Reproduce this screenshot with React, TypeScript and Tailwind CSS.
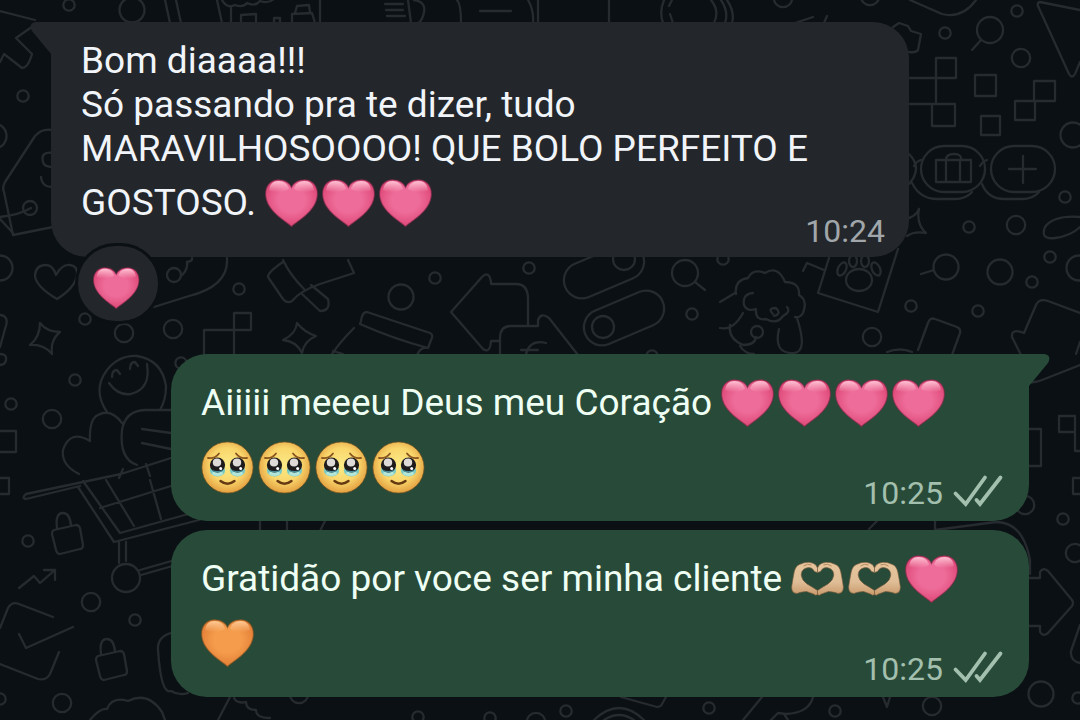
import React from "react";

function PinkHeart({ className = "h-14 w-[57px]" }: { className?: string }) {
  return <Heart id="pink" label="coração rosa" top="#ffc4d6" mid="#ee6c99" low="#dc4474" edge="#7d2748" className={className} />;
}

function OrangeHeart() {
  return <Heart id="orange" label="coração laranja" top="#ffcb94" mid="#f59c4c" low="#e07c34" edge="#80501f" className="h-14 w-[57px]" />;
}

type HeartProps = { id: string; label: string; top: string; mid: string; low: string; edge: string; className: string };

function Heart({ id, label, top, mid, low, edge, className }: HeartProps) {
  const shape = "M28.500 51.500C25 47.500 3.500 37 2.600 20C2.200 10.500 8 4.800 15.500 4.800C22 4.800 26.500 8 28.500 12.500C30.500 8 35 4.800 41.500 4.800C49 4.800 54.800 10.500 54.400 20C53.500 37 32 47.500 28.500 51.500Z";
  return (
    <svg role="img" aria-label={label} viewBox="2 0 57 56" className={`shrink-0 ${className}`}>
      <defs>
        <radialGradient id={`${id}-body`} cx="50%" cy="44%" r="58%">
          <stop offset="0" stopColor={mid} />
          <stop offset="0.45" stopColor={mid} />
          <stop offset="1" stopColor={low} />
        </radialGradient>
        <linearGradient id={`${id}-shine`} x1="0" y1="0" x2="0" y2="1">
          <stop offset="0" stopColor={top} />
          <stop offset="1" stopColor={top} stopOpacity="0" />
        </linearGradient>
      </defs>
      <path d={shape} fill={`url(#${id}-body)`} stroke={edge} strokeOpacity="0.6" strokeWidth="1.2" />
      <path d="M6 15C7 9 10 6 15.500 6C21 6 25 9 26 14C20 18 10 18 6 15Z" fill={`url(#${id}-shine)`} />
      <path d="M51 15C50 9 47 6 41.500 6C36 6 32 9 31 14C37 18 47 18 51 15Z" fill={`url(#${id}-shine)`} />
    </svg>
  );
}

function TearyEye({ cx }: { cx: number }) {
  return (
    <g>
      <ellipse cx={cx} cy="31.500" rx="7.600" ry="6" fill="#79c8c4" />
      <ellipse cx={cx} cy="34.500" rx="5.500" ry="2.600" fill="#b2e6d8" />
      <circle cx={cx} cy="26" r="7.600" fill="#1d1b1c" />
      <path d={`M${cx - 6} 30.500q6 3 12 0q-1.500 3-6 3t-6-3Z`} fill="#4c8c98" />
      <ellipse cx={cx - 0.5} cy="23.500" rx="4.200" ry="3.900" fill="#dedad8" />
      <circle cx={cx + 3.2} cy="29.500" r="1.500" fill="#fff" />
    </g>
  );
}

function TearyFace() {
  return (
    <svg role="img" aria-label="rosto segurando as lágrimas" viewBox="2 0 57 56" className="h-14 w-[57px] shrink-0">
      <defs>
        <radialGradient id="face" cx="50%" cy="45%" r="55%">
          <stop offset="0" stopColor="#fbea86" />
          <stop offset="0.6" stopColor="#f9d66c" />
          <stop offset="1" stopColor="#e3a040" />
        </radialGradient>
      </defs>
      <circle cx="28.500" cy="28.500" r="25.600" fill="url(#face)" stroke="#6e4f20" strokeOpacity="0.7" />
      <TearyEye cx={18.5} />
      <TearyEye cx={38.5} />
      <path d="M9 19q7 1 11-4.500M48 19q-7 1-11-4.500" fill="none" stroke="#8a5520" strokeWidth="1.800" strokeLinecap="round" />
      <path d="M21.500 42q7 5.500 14 0" fill="none" stroke="#653a12" strokeWidth="2.400" strokeLinecap="round" />
    </svg>
  );
}

const hand =
  "M28.500 43.500Q26.500 45 24.500 43L17.500 40.500Q11 41 8 42.500Q4 42.500 3 39L2.600 36Q4 27 5.200 21Q6.500 15 10.500 13.500L15.200 11.700Q20 10.700 24 12.200Q27.500 13.500 28.500 17V21.500L25.500 20.500Q23 15.800 18 16.800Q12 18.500 12.200 24Q12.500 29 18 33Q24 36.500 28.500 39.500Z";

function HeartHands() {
  return (
    <svg role="img" aria-label="mãos em coração" viewBox="2 0 57 56" className="h-14 w-[57px] shrink-0">
      <defs>
        <linearGradient id="skin" x1="0" y1="0" x2="0" y2="1">
          <stop offset="0" stopColor="#e6c49c" />
          <stop offset="0.6" stopColor="#dfbd96" />
          <stop offset="1" stopColor="#c99a6c" />
        </linearGradient>
      </defs>
      <g fill="url(#skin)" stroke="#7a5c3c" strokeOpacity="0.7" strokeWidth="0.900" strokeLinejoin="round">
        <path d={hand} />
        <path d={hand} transform="translate(57 0) scale(-1 1)" />
      </g>
      <path d="M14.500 15q4-3 8-1M42.500 15q-4-3-8-1" fill="none" stroke="#b58a5f" />
    </svg>
  );
}

function ReadTicks() {
  return (
    <svg role="img" aria-label="Entregue" viewBox="0 0 52 32" className="h-8 w-[52px] shrink-0 overflow-visible">
      <path d="M2.500 16.500L12.700 27L32 0.500M23.500 23L27 27L47.500 0.500" fill="none" stroke="#a3bfad" strokeWidth="3.800" strokeLinejoin="miter" strokeLinecap="round" />
    </svg>
  );
}

const small = [[69, 5], [23, 96], [85, 319], [239, 289], [75, 380], [11, 404], [28, 541], [135, 620], [0, 699], [435, 278], [529, 268], [692, 314], [181, 363], [945, 33], [1017, 11], [1065, 197], [969, 227], [911, 306], [978, 311], [1032, 282], [1050, 257], [723, 259], [1063, 519], [835, 711], [1078, 698], [652, 356], [566, 711], [709, 708], [418, 717], [490, 718]];
const medium = [[124, 333], [173, 329], [91, 602], [52, 419], [62, 703], [872, 337], [1021, 58], [1016, 225], [1025, 505], [932, 706], [1075, 553], [870, -4], [783, -2], [536, 722], [299, 694]];
const large = [[132, 10], [401, 297], [1000, 272], [1073, 135], [1079, 268], [0, 268], [-6, 136], [1041, 694], [946, 267]];

function Wallpaper() {
  return (
    <svg aria-hidden="true" viewBox="0 0 1080 720" preserveAspectRatio="xMidYMin slice" className="absolute inset-0 h-full w-full">
      <g fill="none" stroke="#262b2f" strokeWidth="2.300" strokeLinejoin="round" strokeLinecap="round">
        {small.map(([x, y]) => <circle key={`${x}-${y}`} cx={x} cy={y} r="5.700" />)}
        {medium.map(([x, y]) => <circle key={`${x}-${y}`} cx={x} cy={y} r="9.200" />)}
        {large.map(([x, y]) => <circle key={`${x}-${y}`} cx={x} cy={y} r="12.500" />)}

        <path d="M0 11L35 20M36 24L16 38L32 54Q28 68 22 68L4 54L0 62" />
        <path d="M165 0L170 23M176 0L181 23M217 0L222 23M222 0q5 9 13 5q8 3 12-2q8 4 13-2q8 3 14-2M231 8v15M241 23v-8l15-1v9M274 23v-5h6v5M292 23v-9l20-1l3 10M295 13l2-7l12-1l1 7M320 0v23" />
        <path d="M385 4h18M386 10h17M387 16h18M408 0l3 23M414 0q14 2 9 16q-2 6-6 8M457 0q4 4 4 23M480 11h31M528 0q6 10 5 23M538 0v23M609 0v23" />
        <path d="M664 0q-5 12-1 23M672 0l-3 6M670 14l3 9M711 0q9 11 3 23M721 0q8 12 4 23M727 0q8 12 5 23M795 23l18-6M824 23l3-7M910 0l32 14q20 5 34-14" />
        <circle cx="990" cy="30" r="13" /><path d="M981 40l-9 10M893 27l6-4l9 3l3 5l10 3l-3 16q-2 3-9 2" />
        <path d="M1080 10L1040 2q-3 0-2 4l31 68q3 5 6 0l5-12" />
        <path d="M52 130q-10-2-17 6L5 182q-3 6-1 10l9 43l40-8M54 153q-14-2-11 9q1 5 10 5M41 177q1 10 11 10" />
        <circle cx="30" cy="208" r="7" /><path d="M31 208q-12 7-31 9M0 219l13 14" />

        <path d="M936 58h20v20h-20zM910 78h26v26h-26M932 104h23v22h-23zM975 75h21v21h-21zM981 116h19v19h-19zM1034 81h21v20h-21zM1015 101h20v19h-20z" />
        <rect x="921" y="146" width="64" height="46" rx="23" /><path d="M912 183q8 16 25 16h18q11 0 17-7M909 154q14 14 0 30M921 160q-4 1-7 6M987 160q-4 1-7 6M982 184q6 15 22 15h18q11 0 17-7" />
        <rect x="991" y="146" width="64" height="46" rx="23" /><path d="M1009 169h27M1023 156v27M936 160h35v22h-35zM946 160v22M960 160v22M946 160q0-6 8-6t7 6" />
        <path d="M919 209q-3 8-14 10M919 209q-3 15 7 24q-12-2-19 3M1080 217q-26-2-35 10q-5 13 10 11q16-2 25-11" />

        <path d="M57 299Q35 286 35 275Q36 265 46 265Q53 265 56 275Q62 264 70 265Q78 266 77 275Q75 288 57 299Z" />
        <path d="M40 323q7 9 20 9q-10 8-8 22q-8-10-22-9q10-8 10-22ZM297 323q7 9 19 13q-12 5-14 17q-6-12-19-13q13-6 14-17Z" />
        <path d="M0 315q10 1 5 14L0 347M0 354q7 0 6 6q-1 5-6 5M154 307l35-11q40-10 38-38" />
        <circle cx="174" cy="275" r="7" /><path d="M181 276q7-6 6-14q6-1 5-4M283 262q-15 10-15 15l15 22q4 5 9 2q8-10 28-17l34-11l-6-13M283 260q7 15 21 29M311 285l17 14q3 12-8 12l-18-17M234 313h17v17h-17zM234 330h-30v28M234 330v28" />
        <path d="M107 412q-15-22 0-42q12-15 30-14q25 4 29 30q0 14-6 24M109 383q9 13 22 11q20-5 16-30M112 377q0-7 5-7l3 4M130 369q0-7 5-7l3 4" />
        <path d="M122 423q-11-15-24-8q-9 4-8 26q-20-12-27 9q-2 15 16 24M171 410h-26q-20 1-23 20q-3 29 15 35M142 429l29 4M142 443l29 6M171 458l-50 16l-95 20q-5 4 0 5l54-13M123 469l-4 9M146 464l4 12" />
        <path d="M78 487l36 55l85-22M83 481l37 52l72-20M100 508l71-22M106 480l28 46M150 480l11 39M119 542v21M126 542v19M140 570l35-10M141 575l35-10" /><circle cx="126" cy="578" r="14" />
        <g><path d="M54 530l22-5q3 0 4 3l3 17q0 4-3 4l-20 5q-3 0-4-4l-4-16q0-3 2-4ZM57 528q-2-15 6-15q7 0 8 13" /><path transform="translate(44 126)" d="M54 530l22-5q3 0 4 3l3 17q0 4-3 4l-20 5q-3 0-4-4l-4-16q0-3 2-4ZM57 528q-2-15 6-15q7 0 8 13" /></g>
        <path d="M19 588l15-12l6 7l15-13M44 570h11v10M0 628l8-20q4-7 11-4l34 13M19 634l7 14l47-21M0 664l38 15q8 2 12-5l9-22M0 431h16v21H0M0 478h9v16H0M171 633q-14 4-13 17q3 45 13 41q8 5 17 2" />
        <path d="M90 720q10-12 17-11q5-13 21-8q20-10 34 11l3 8M230 697l-12 23M234 698q3 6 12 4q0 8 10 8q0 8 14 8M260 521v10M287 521v10M325 521l-5 10" />

        <path d="M361 321q1-9 6-9l63 21q4 2 1 7l-3 8q-34-9-68-24zM428 348q-7-2-11 7M332 354q8-12 22-26M333 351l10 3" />
        <path d="M451 312l31-35q7-7 9 5v2h25q12 0 12 15v27M451 312l32 37q7 5 8-8h9M500 354v-16q0-12 11-12h27v-6q3-8 11-2l29 37M521 350h17M526 354q4-15 20-11" />
        <rect x="-42" y="-18" width="84" height="36" rx="18" transform="translate(604 271) rotate(-23)" /><rect x="-42" y="-18" width="84" height="36" rx="18" transform="translate(624 318) rotate(-23)" /><circle cx="603" cy="327" r="11" /><circle cx="624" cy="259" r="11" />
        <circle cx="685" cy="273" r="13" /><path d="M695 282l10 8" />
        <path d="M736 294q-2-14 12-16q5-10 17-5q13-8 20 9q15 0 14 13q9 5 4 18q-3 5-8 4M753 293q-11 1-9 12q3 7 12 4q-1 12 10 10q11 6 17-3q8-4 4-9M773 314q-6-6 3-6q6 6-2 8M720 302l15-9M720 328q13 3 23-15M730 325q-2 14 13 20q12 0 13-8M740 346q5 8 14 8M779 329q-6 25 15 24q14-1 3-35" /><circle cx="757" cy="332" r="6" />
        <path d="M829 258l-11 35l60 19l20-63M824 270l-17-7l-4 8" /><ellipse cx="859" cy="280" rx="13" ry="11" /><ellipse cx="842" cy="269" rx="4" ry="7" transform="rotate(25 842 269)" /><ellipse cx="876" cy="269" rx="4" ry="7" transform="rotate(-25 876 269)" /><ellipse cx="853" cy="261" rx="4" ry="6" /><ellipse cx="865" cy="261" rx="4" ry="6" />
        <path d="M934 270l-13 4M918 350l10-27q2-6 7-4l22 8q4 2 3 6l-8 22M887 352q13-5 25 0M1080 313l-32-12q-9-3-12 4l-12 28q-13-5-12 4l9 18M1030 382q5 1 12-2l38-15M1080 342l-4 12" />
        <path d="M1029 429h12v37h-12M1059 416h16v16h-16zM1075 432v19h5M1080 478h-7v16h7M869 529l10-10M935 520v10l61-8q27 0 34 38v14M1029 578h11v-6q3-5 8-1l24 29q2 3 0 6l-24 27q-5 4-8-1v-6h-11M1080 625l-9 26q-1 10 9 12" />
        <path d="M594 720q25-24 50 0M604 720q15-10 30 0M621 697l36 10q4 0 5-3l4-7M762 697l-19 23M813 697q-4 16-27 17l-8-1l-7 7M784 714l4 6M883 697l4 10l3-10" />
      </g>
    </svg>
  );
}

type BubbleProps = { side: "in" | "out"; tail?: boolean; time: string; children: React.ReactNode };

function Bubble({ side, tail = false, time, children }: BubbleProps) {
  const out = side === "out";
  return (
    <article className={`relative grid w-full max-w-[858px] rounded-[36px] ${out ? "self-end bg-[#284b39] text-[#effff4]" : "bg-[#23272b] text-[#f1f5f9]"} ${tail ? (out ? "rounded-tr-none" : "rounded-tl-none") : ""}`}>
      {tail && (
        <svg aria-hidden="true" viewBox="0 0 22 32" className={`absolute top-0 h-8 w-[22px] ${out ? "-right-[21px]" : "-left-[21px] -scale-x-100"}`}>
          <path d="M0 0H16Q24 1 20 9L1 32H0Z" fill={out ? "#284b39" : "#23272b"} />
        </svg>
      )}
      <div className="col-start-1 row-start-1 px-[30px] pt-[17px] pb-[22px] text-[37px] leading-[44px]">{children}</div>
      <div className={`col-start-1 row-start-1 flex items-center gap-2.5 self-end justify-self-end pr-6 text-[32px] leading-8 ${out ? "pb-3 text-[#a3bfad]" : "pb-2.5 text-[#a1a6aa]"}`}>
        <time>{time}</time>
        {out && <ReadTicks />}
      </div>
    </article>
  );
}

function EmojiLine({ text, children }: { text?: string; children: React.ReactNode }) {
  return (
    <p className="flex min-h-16 items-center">
      {text && <span className="whitespace-pre-wrap">{text}</span>}
      {children}
    </p>
  );
}

export default function App() {
  return (
    <main className="relative min-h-screen overflow-hidden bg-[#0b1014] font-['Roboto',sans-serif]">
      <Wallpaper />
      <div className="relative flex flex-col px-[51px] py-[22px]">
        <Bubble side="in" tail time="10:24">
          <p>Bom diaaaa!!!</p>
          <p>Só passando pra te dizer, tudo</p>
          <p>MARAVILHOSOOOO! QUE BOLO PERFEITO E</p>
          <EmojiLine text="GOSTOSO. "><PinkHeart /><PinkHeart /><PinkHeart /></EmojiLine>
        </Bubble>
        <button type="button" aria-label="Reação: coração rosa" className="relative -mt-3.5 ml-6 flex h-[81px] w-[86px] items-center justify-center rounded-full border-3 border-[#0b1014] bg-[#23272b] pt-2">
          <PinkHeart className="h-[50px] w-[50px]" />
        </button>
        <div className="mt-[30px] flex flex-col gap-[9px]">
          <Bubble side="out" tail time="10:25">
            <EmojiLine text="Aiiiii meeeu Deus meu Coração "><PinkHeart /><PinkHeart /><PinkHeart /><PinkHeart /></EmojiLine>
            <EmojiLine><TearyFace /><TearyFace /><TearyFace /><TearyFace /></EmojiLine>
          </Bubble>
          <Bubble side="out" time="10:25">
            <EmojiLine text="Gratidão por voce ser minha cliente "><HeartHands /><HeartHands /><PinkHeart /></EmojiLine>
            <EmojiLine><OrangeHeart /></EmojiLine>
          </Bubble>
        </div>
      </div>
    </main>
  );
}
